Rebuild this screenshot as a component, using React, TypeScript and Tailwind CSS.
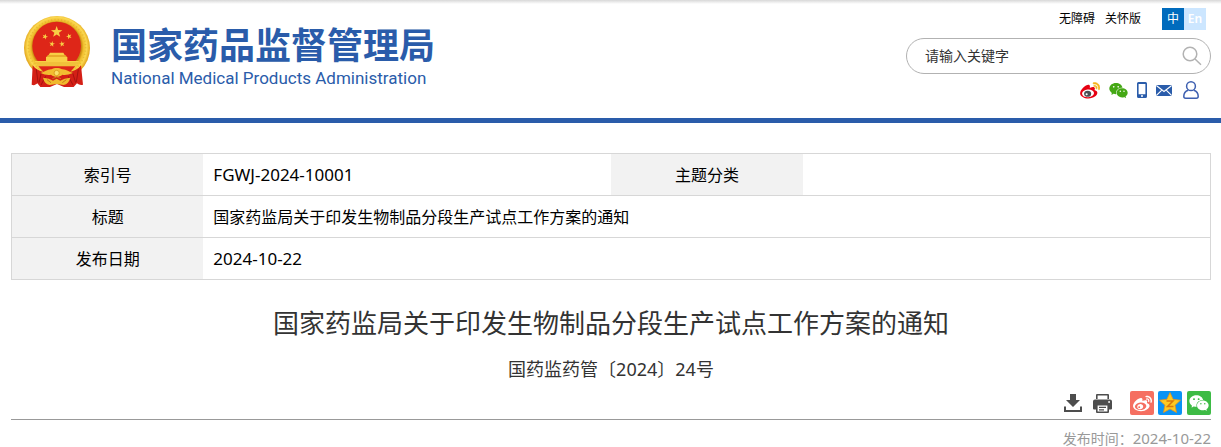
import React from "react";
import { AiFillWechat } from "react-icons/ai";

const star = (cx: number, cy: number, r: number, inner = 0.4, turn = 0) =>
  Array.from({ length: 10 }, (_, i) => {
    const radius = i % 2 === 0 ? r : r * inner;
    const angle = ((i * 36 - 90 + turn) * Math.PI) / 180;
    return `${(cx + radius * Math.cos(angle)).toFixed(2)},${(cy + radius * Math.sin(angle)).toFixed(2)}`;
  }).join(" ");

function Emblem() {
  return (
    <svg className="h-[71px] w-[66px] shrink-0" viewBox="27 17 198 213" role="img" aria-label="国徽">
      <defs>
        <radialGradient id="ring" gradientUnits="userSpaceOnUse" cx="126" cy="110" r="99">
          <stop offset="0.74" stopColor="#c98a12" />
          <stop offset="0.8" stopColor="#f0bd2c" />
          <stop offset="0.9" stopColor="#fbd850" />
          <stop offset="1" stopColor="#e2a51c" />
        </radialGradient>
      </defs>
      <ellipse cx="126" cy="113" rx="99" ry="96" fill="url(#ring)" />
      <ellipse cx="126" cy="111" rx="86" ry="83" fill="none" stroke="#cf9416" strokeWidth="5" strokeDasharray="3 7" opacity="0.35" />
      <circle cx="125" cy="107" r="73" fill="#de2618" />
      <g fill="#f8cf45">
        <polygon points={star(125, 65, 18)} />
        <polygon points={star(90, 79, 9, 0.4, 20)} />
        <polygon points={star(162, 78, 9, 0.4, -20)} />
        <polygon points={star(111, 101, 9, 0.4, 10)} />
        <polygon points={star(141, 101, 9, 0.4, -10)} />
        <path d="M105 127h40l4 7h-48z" />
        <path d="M99 134h52l5 6H94z" fill="#e8ac2a" />
        <path d="M93 140h64v12H93z" />
        <path d="M59 152h133c-3 9-7 15-12 20H71c-6-6-9-12-12-20z" />
      </g>
      <path d="M61 158h128M66 164h119" stroke="#e3a426" strokeWidth="2" />
      <path d="M70 168h111l-18 20H88z" fill="#de2618" />
      <path d="M53 165c8 11 18 17 34 20l38 11 38-11c16-3 27-9 35-20l6 58c-6 2-12 1-18-4l-10 11h-29l-21-9-21 9H76l-9-11c-5 5-11 7-17 4z" fill="#d41f16" />
      <path d="M64 177l5 39M79 187l-7 30M190 177l-6 38M173 188l9 29M92 198l-14 26M160 198l14 26" stroke="#a5130f" strokeWidth="3" fill="none" />
      <path d="M76 188c13-3 22-12 34-11 7-5 23-5 31 0 12-1 21 8 33 11-13 4-23 8-32 5-9 8-24 8-34 0-9 3-20-1-32-5z" fill="#f2bd31" />
      <circle cx="125" cy="188" r="8" fill="#fbe06a" stroke="#dca022" strokeWidth="3" />
      <path d="M84 202c14 1 23 4 30 9l11-6 11 6c8-5 17-8 30-9-3 12-10 20-20 22l-21-3-21 3c-11-2-17-9-20-22z" fill="#f0b92d" />
      <path d="M96 208l12 9M154 208l-12 9M112 205l13-5 13 5" stroke="#c9781a" strokeWidth="3" fill="none" />
    </svg>
  );
}

function WeiboIcon() {
  return (
    <svg className="h-[17px] w-5" viewBox="0 20 512 440" aria-hidden="true">
      <ellipse cx="205" cy="316" rx="158" ry="104" fill="#fff" />
      <path fill="#f5b21a" stroke="#f5b21a" strokeWidth="12" d="M407 177.6c7.6-24-13.4-46.8-37.4-41.7-22 4.8-28.8-28.1-7.1-32.8 50.1-10.9 92.3 37.1 76.5 84.8-6.800 21.2-38.800 10.800-32-10.300zM347.900 35.100c-25.900 5.600-16.800 43.700 8.300 38.300 72.300-15.200 134.800 52.800 111.700 124-7.400 24.200 29.100 37 37.400 12 31.900-99.800-55.100-195.900-157.400-174.300z" />
      <path fill="#e60012" d="M214.8 446.7C108.5 446.7 0 395.3 0 310.4c0-44.3 28-95.4 76.3-143.7C176 67 279.5 65.8 249.9 161c-4 13.1 12.3 5.7 12.3 6 79.5-33.6 140.5-16.8 114 51.4-3.7 9.4 1.1 10.9 8.3 13.1 135.7 42.3 34.8 215.2-169.7 215.2zm143.7-146.3c-5.4-55.7-78.5-94-163.4-85.7-84.8 8.6-148.8 60.3-143.4 116s78.5 94 163.4 85.7c84.8-8.6 148.8-60.3 143.4-116z" />
      <ellipse cx="195" cy="324" rx="92" ry="80" fill="#4a4e54" />
      <circle cx="169" cy="338" r="27" fill="#fff" />
    </svg>
  );
}

const th = "w-[16%] bg-[#f2f2f2] text-center font-normal";
const td = "px-[10px]";

export default function App() {
  return (
    <div className="bg-white font-['Noto_Sans','Noto_Sans_CJK_SC',sans-serif] text-black">
      <header className="border-b-[5px] border-[#2a5caa] bg-[linear-gradient(#d8d8d8,#fff_4px)]">
        <div className="flex h-[118px] items-start justify-between pr-[10px] pl-6">
          <a href="#home" className="flex items-start gap-[21px] pt-4">
            <Emblem />
            <span className="flex flex-col pt-[10px] text-[#2a5caa]">
              <span className="font-['Liberation_Sans','Noto_Sans_CJK_SC',sans-serif] text-[36px] leading-[42px] font-bold">国家药品监督管理局</span>
              <span className="font-[Roboto,sans-serif] text-[17px] leading-5">National Medical Products Administration</span>
            </span>
          </a>
          <div className="flex w-[305px] flex-col pt-2">
            <div className="flex h-[22px] items-center justify-end pr-[5px] text-[12px]">
              <a href="#accessible">无障碍</a>
              <a href="#care" className="ml-[10px]">关怀版</a>
              <a href="#zh" className="ml-[21px] flex h-[22px] w-[22px] items-center justify-center bg-[#006bbd] text-white">中</a>
              <a href="#en" className="flex h-[22px] w-[22px] items-center justify-center bg-[#cce6ff] font-semibold text-white">En</a>
            </div>
            <form className="mt-2 flex h-9 items-center rounded-full border border-[#b2b2b2] pr-2 pl-[18px]" onSubmit={(e) => e.preventDefault()}>
              <input aria-label="请输入关键字" placeholder="请输入关键字" className="min-w-0 flex-1 bg-transparent text-[14px] leading-5 outline-none placeholder:text-[#333]" />
              <button aria-label="搜索" className="shrink-0">
                <svg className="h-5 w-5" viewBox="0 0 20 20" fill="none" stroke="#b2b2b2" strokeWidth="1.5" aria-hidden="true">
                  <circle cx="8" cy="8" r="6.8" />
                  <path d="M13 13l6 5.8" />
                </svg>
              </button>
            </form>
            <div className="mt-[6px] flex h-5 items-center justify-end pr-3">
              <a href="#weibo" aria-label="微博"><WeiboIcon /></a>
              <a href="#wechat" aria-label="微信" className="ml-2">
                <AiFillWechat className="h-[21px] w-[21px] text-[#45a815]" />
              </a>
              <a href="#mobile" aria-label="移动端" className="ml-2">
                <svg className="h-4 w-[10px]" viewBox="0 0 10 16" aria-hidden="true">
                  <path fillRule="evenodd" fill="#2a5caa" d="M1.5 0h7Q10 0 10 1.5v13Q10 16 8.5 16h-7Q0 16 0 14.5v-13Q0 0 1.5 0zM1.6 2v10.3h6.8V2zM5 13.1a1 1 0 100 2 1 1 0 000-2z" />
                </svg>
              </a>
              <a href="#mail" aria-label="邮箱" className="ml-[9px]">
                <svg className="h-[11px] w-4" viewBox="0 0 16 11" aria-hidden="true">
                  <path fill="#2a5caa" d="M0 0h16v11H0z" />
                  <path stroke="#fff" strokeWidth="1.1" fill="none" d="M.3.5L8 6.5 15.7.5M.3 10.5l5.5-5.3M15.7 10.5l-5.5-5.3" />
                </svg>
              </a>
              <a href="#user" aria-label="用户" className="ml-[11px]">
                <svg className="h-[18px] w-4" viewBox="0 0 16 18" fill="none" stroke="#3d5fb0" strokeWidth="1.5" aria-hidden="true">
                  <circle cx="8" cy="5.2" r="4.4" />
                  <path d="M5.2 9.2C2.4 10.2.8 12.5.8 15.2c0 1.4.6 2 1.8 2h10.8c1.2 0 1.8-.6 1.8-2 0-2.7-1.6-5-4.4-6" />
                </svg>
              </a>
            </div>
          </div>
        </div>
      </header>

      <main className="pr-[10px] pl-[11px]">
        <table className="mt-[30px] w-full table-fixed border-collapse border border-[#d7d7d7] text-[16px] leading-6">
          <tbody>
            <tr className="h-[42px] border-b border-[#d7d7d7]">
              <th scope="row" className={th}>索引号</th>
              <td className="w-[34%] px-[10px] text-[17px]">FGWJ-2024-10001</td>
              <th scope="row" className={th}>主题分类</th>
              <td className={td}></td>
            </tr>
            <tr className="h-[42px] border-b border-[#d7d7d7]">
              <th scope="row" className={th}>标题</th>
              <td className={td} colSpan={3}>国家药监局关于印发生物制品分段生产试点工作方案的通知</td>
            </tr>
            <tr className="h-[42px]">
              <th scope="row" className={th}>发布日期</th>
              <td className="px-[10px] text-[17px]" colSpan={3}>2024-10-22</td>
            </tr>
          </tbody>
        </table>

        <h1 className="mt-6 text-center text-[26px] leading-[38px] text-[#333]">国家药监局关于印发生物制品分段生产试点工作方案的通知</h1>
        <p className="mt-[13px] text-center text-[18px] leading-7 text-[#333]">国药监药管〔2024〕24号</p>

        <div className="mt-2 flex h-[29px] items-start justify-end border-b border-[#999]">
          <button aria-label="下载" className="mt-[3px]">
            <svg className="h-[18px] w-[18px]" viewBox="0 0 18 18" fill="#4d4d4d" aria-hidden="true">
              <path d="M6 0h6v6h4L9 13 2 6h4z" />
              <path d="M0 12.5h2V16h14v-3.5h2V18H0z" />
            </svg>
          </button>
          <button aria-label="打印" className="mt-[3px] ml-[11px]">
            <svg className="h-[19px] w-[19px]" viewBox="0 0 19 19" fill="#4d4d4d" aria-hidden="true">
              <path fillRule="evenodd" d="M4 0h11q1 0 1 1v4H3V1q0-1 1-1zM4.6 1.600V5h9.8V1.600z" />
              <path fillRule="evenodd" d="M2 5.500h15q2 0 2 2v7q0 1-1 1h-2V11H3v4.500H1q-1 0-1-1v-7q0-2 2-2zM15.200 7.200v1.600H17V7.200z" />
              <path fillRule="evenodd" d="M3 10h13v8q0 1-1 1H4q-1 0-1-1zM4.600 11.500v6h9.800v-6zM6 12.700h7V14H6zM6 15.200h5v1.200H6z" />
            </svg>
          </button>
          <a href="#share-weibo" aria-label="分享到微博" className="ml-[18px] flex h-6 w-6 items-center justify-center rounded-[2px] bg-[#f56f61]">
            <svg className="h-[17px] w-[19px]" viewBox="0 20 512 440" fill="#fff" aria-hidden="true">
              <path d="M407 177.6c7.6-24-13.4-46.8-37.4-41.7-22 4.8-28.8-28.1-7.1-32.8 50.1-10.9 92.3 37.1 76.5 84.8-6.8 21.2-38.8 10.8-32-10.3zM214.8 446.7C108.5 446.7 0 395.3 0 310.4c0-44.3 28-95.4 76.3-143.7C176 67 279.5 65.8 249.9 161c-4 13.1 12.3 5.7 12.3 6 79.5-33.6 140.5-16.8 114 51.4-3.7 9.4 1.1 10.9 8.3 13.1 135.7 42.3 34.8 215.2-169.7 215.2zm143.7-146.3c-5.4-55.7-78.5-94-163.4-85.7-84.8 8.6-148.8 60.3-143.4 116s78.5 94 163.4 85.7c84.8-8.6 148.8-60.3 143.4-116zM347.9 35.1c-25.9 5.6-16.8 43.7 8.3 38.3 72.3-15.2 134.8 52.8 111.7 124-7.4 24.2 29.1 37 37.4 12 31.9-99.8-55.1-195.9-157.4-174.3z" />
              <path d="M269.4 346.1c-17.1 38.8-66.8 60-109.1 46.3-40.8-13.1-58-53.4-40.3-89.7 17.7-35.4 63.1-55.4 103.4-45.1 42 10.8 63.1 50.2 46 88.5z" />
              <circle cx="168" cy="338" r="26" fill="#f56f61" />
            </svg>
          </a>
          <a href="#share-qzone" aria-label="分享到QQ空间" className="ml-1 flex h-6 w-6 items-center justify-center rounded-[2px] bg-[#0a93f5]">
            <svg className="h-6 w-6" viewBox="0 0 24 24" aria-hidden="true">
              <polygon points={star(12, 12.6, 11, 0.48)} fill="#fdc922" stroke="#e8941a" strokeWidth="0.8" strokeLinejoin="round" />
              <path d="M8.5 10H15l-5.500 5.500h6" fill="none" stroke="#d9780c" strokeWidth="1.5" />
            </svg>
          </a>
          <a href="#share-wechat" aria-label="分享到微信" className="ml-[5px] flex h-6 w-6 items-center justify-center rounded-[2px] bg-[#3dbb45]">
            <AiFillWechat className="h-[22px] w-[22px] text-white" />
          </a>
        </div>
        <p className="mt-2 text-right text-[14px] leading-5 text-[#999]">
          发布时间：<time dateTime="2024-10-22" className="text-[15px]">2024-10-22</time>
        </p>
      </main>
    </div>
  );
}
